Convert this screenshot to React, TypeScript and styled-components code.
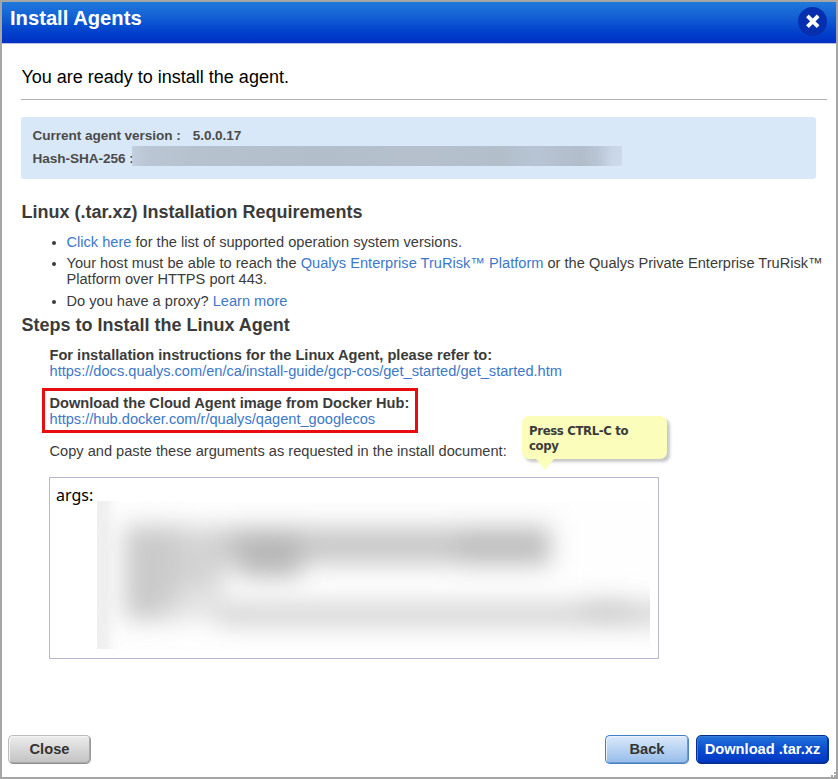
import React from "react";
import styled, { createGlobalStyle } from "styled-components";

const GlobalStyle = createGlobalStyle`
  *, *::before, *::after { box-sizing: border-box; }
  body {
    margin: 0;
    background: #fff;
    font-family: "Liberation Sans", Arial, sans-serif;
    color: #3b3b3b;
  }
`;

const Dialog = styled.div`
  position: relative;
  display: flex;
  flex-direction: column;
  width: 838px;
  height: 779px;
  border: 2px solid #a5a5a5;
  background: #fff;
`;

const Header = styled.header`
  display: flex;
  justify-content: space-between;
  align-items: flex-start;
  flex: none;
  height: 42px;
  padding: 5px 9px 0 8px;
  border-bottom: 1px solid #b4c0e4;
  background: linear-gradient(#2078dc 0%, #1565d6 30%, #0343cc 70%, #0030c4 100%);
`;

const Title = styled.h1`
  margin: 0;
  font-size: 20.2px;
  line-height: 23px;
  color: #fff;
`;

const CloseIcon = styled.button`
  display: flex;
  width: 29px;
  height: 29px;
  padding: 0;
  border: 0;
  background: none;
`;

const Body = styled.main`
  flex: 1;
  padding: 22px 9px 0 19px;
`;

const Intro = styled.p`
  margin: 0;
  height: 34px;
  padding-left: 0.4px;
  border-bottom: 1px solid #b0b0b0;
  font-size: 18px;
  line-height: 22px;
  color: #000;
`;

const InfoPanel = styled.dl`
  display: flex;
  flex-direction: column;
  width: 795px;
  height: 62px;
  margin: 17px 0 23px;
  padding: 6px 11.5px;
  border-radius: 3px;
  background: #d9e8f8;
  font-size: 13.6px;
  font-weight: bold;
  line-height: 25px;
  letter-spacing: -0.06px;
  color: #4b4b4b;
`;

const InfoRow = styled.div`
  display: flex;
  height: 23px;
`;

const InfoLabel = styled.dt`
  white-space: nowrap;
`;

const InfoValue = styled.dd`
  margin: 0 0 0 12px;
`;

const HashLabel = styled(InfoLabel)`
  width: 99.5px;
`;

const HashValue = styled.dd`
  width: 490px;
  height: 20px;
  margin: 0;
  background:
    radial-gradient(ellipse 42px 24px at 470px 0, rgba(188, 202, 220, 0.3), transparent),
    linear-gradient(90deg, #c2cfde 0, #bac6d3 16px, #b6c2ce 60px, #b2bfcb 190px, #b5c0cc 290px, #b2bfcb 370px, #b7c4d3 405px, #b1bcc9 450px, #b8c4d2 466px, #cad8e9 480px, #cddbeb 490px);
`;

const SectionTitle = styled.h2`
  margin: 0;
  padding-left: 0.4px;
  font-size: 18px;
  line-height: 20px;
`;

const Requirements = styled.ul`
  margin: 12px -9px 6px 0;
  padding: 0 0 0 45.5px;
  font-size: 14.62px;
  line-height: 16px;
`;

const Requirement = styled.li`
  margin-bottom: 5px;
  white-space: nowrap;
  &:nth-child(2) { margin-bottom: 6px; }
`;

const Link = styled.a`
  color: #3c78c8;
  text-decoration: none;
`;

const Step = styled.section<{ $highlight?: boolean }>`
  width: ${(p) => (p.$highlight ? "376px" : "fit-content")};
  margin: ${(p) => (p.$highlight ? "9px 0 10px 21px" : "12px 0 0 28px")};
  padding: ${(p) => (p.$highlight ? "4px 0 3px 4.5px" : "0 0 0 0.5px")};
  border: ${(p) => (p.$highlight ? "3px solid #e80c10" : "0")};
  font-size: 14.62px;
  line-height: 16px;
  white-space: nowrap;
`;

const StepTitle = styled.strong`
  display: block;
`;

const CopyHint = styled.p`
  margin: 0 0 18px 28.5px;
  font-size: 14.62px;
  line-height: 16px;
`;

const ArgsBox = styled.div`
  width: 610px;
  height: 182px;
  margin-left: 28px;
  padding: 6px 6px;
  border: 1px solid #b9b7cb;
  font-family: "Noto Sans", Tahoma, sans-serif;
  font-size: 16px;
  line-height: 22px;
  color: #000;
`;

const Redaction = styled.svg`
  display: block;
  margin: -5px 0 0 41px;
`;

const Tooltip = styled.div`
  position: absolute;
  left: 520px;
  top: 414px;
  width: 145px;
  height: 43px;
  padding: 7px;
  border-radius: 7px;
  background: #fbfdba;
  box-shadow: 3px 3px 3px rgba(0, 0, 0, 0.22);
  font: bold 13px/15px "DejaVu Sans Condensed", "DejaVu Sans", Tahoma, sans-serif;
  font-stretch: condensed;
  letter-spacing: -0.35px;
  &::after {
    content: "";
    position: absolute;
    left: 14px;
    top: 43px;
    border: 9px solid transparent;
    border-top: 11px solid #fbfdba;
    border-bottom: 0;
  }
`;

const Footer = styled.footer`
  display: flex;
  gap: 7px;
  flex: none;
  padding: 0 7px 13px 6px;
`;

type Kind = "plain" | "light" | "primary";

const looks: Record<Kind, string> = {
  plain: `
    width: 83px; margin-right: auto; color: #333;
    border-color: #bcbcbc #999 #8e8e8e #bcbcbc;
    background: linear-gradient(#ececec, #c2c2c2);
    box-shadow: inset 1px 1px 0 #f4f4f4, inset -1px -1px 0 #aaa;`,
  light: `
    width: 84px; color: #333;
    border-color: #3f7fc6 #4e86c4 #4a80bd #3f7fc6;
    background: linear-gradient(#dce9fa, #95bce9);
    box-shadow: inset 1px 1px 0 #eaf3fd, inset -1px -1px 0 #699bd2;`,
  primary: `
    width: 133px; color: #fff;
    border-color: #062f92;
    background: linear-gradient(#2273da, #0a4dce 50%, #0035c4);
    box-shadow: inset 1px 1px 0 #3a7edb, inset -1px -1px 0 #0532a2;`,
};

const Button = styled.button<{ $kind: Kind }>`
  height: 29px;
  padding: 0 0 2px;
  border: 1px solid;
  border-radius: 5px;
  font: bold 14.67px "Liberation Sans", Arial, sans-serif;
  white-space: nowrap;
  ${(p) => looks[p.$kind]}
`;

const Grip = styled.svg`
  position: absolute;
  right: 0;
  bottom: 0;
`;

export default function App() {
  return (
    <>
      <GlobalStyle />
      <Dialog>
        <Header>
          <Title>Install Agents</Title>
          <CloseIcon aria-label="Close dialog">
            <svg width="29" height="29" viewBox="0 0 29 29">
              <circle cx="14.5" cy="14.5" r="14.5" fill="#052fae" />
              <path d="M10.8 10.3 18.8 18.3M18.8 10.3l-8 8" stroke="#fff" strokeWidth="3.8" strokeLinecap="square" />
            </svg>
          </CloseIcon>
        </Header>
        <Body>
          <Intro>You are ready to install the agent.</Intro>
          <InfoPanel>
            <InfoRow>
              <InfoLabel>Current agent version :</InfoLabel>
              <InfoValue>5.0.0.17</InfoValue>
            </InfoRow>
            <InfoRow>
              <HashLabel>Hash-SHA-256 :</HashLabel>
              <HashValue />
            </InfoRow>
          </InfoPanel>
          <SectionTitle>Linux (.tar.xz) Installation Requirements</SectionTitle>
          <Requirements>
            <Requirement>
              <Link>Click here</Link> for the list of supported operation system versions.
            </Requirement>
            <Requirement>
              Your host must be able to reach the <Link>Qualys Enterprise TruRisk™ Platform</Link> or the Qualys Private Enterprise TruRisk™
              <br />
              Platform over HTTPS port 443.
            </Requirement>
            <Requirement>
              Do you have a proxy? <Link>Learn more</Link>
            </Requirement>
          </Requirements>
          <SectionTitle>Steps to Install the Linux Agent</SectionTitle>
          <Step>
            <StepTitle>For installation instructions for the Linux Agent, please refer to:</StepTitle>
            <Link>https://docs.qualys.com/en/ca/install-guide/gcp-cos/get_started/get_started.htm</Link>
          </Step>
          <Step $highlight>
            <StepTitle>Download the Cloud Agent image from Docker Hub:</StepTitle>
            <Link>https://hub.docker.com/r/qualys/qagent_googlecos</Link>
          </Step>
          <CopyHint>Copy and paste these arguments as requested in the install document:</CopyHint>
          <ArgsBox>
            args:
            <Redaction width="553" height="148" viewBox="0 0 553 148">
              <defs>
                <filter id="soft" x="-20%" y="-60%" width="140%" height="220%">
                  <feGaussianBlur stdDeviation="12" />
                </filter>
                <linearGradient id="edge">
                  <stop offset="0" stopColor="#efefef" />
                  <stop offset="0.35" stopColor="#f1f1f1" />
                  <stop offset="1" stopColor="#fff" stopOpacity="0" />
                </linearGradient>
              </defs>
              <rect width="553" height="148" fill="#fefefe" />
              <rect width="28" height="148" fill="url(#edge)" />
              <g filter="url(#soft)">
                <rect x="27" y="24" width="60" height="95" fill="#cacaca" />
                <rect x="80" y="26" width="48" height="64" fill="#d2d3d2" />
                <rect x="124" y="26" width="330" height="37" fill="#c8c8c8" />
                <rect x="142" y="30" width="62" height="46" fill="#b8b8b8" />
                <rect x="360" y="26" width="92" height="38" fill="#bebebe" />
                <rect x="70" y="95" width="55" height="22" fill="#e0e0e0" />
                <rect x="120" y="103" width="480" height="21" fill="#d0d0d0" />
                <rect x="485" y="99" width="48" height="25" fill="#c9c9c9" />
              </g>
            </Redaction>
          </ArgsBox>
        </Body>
        <Footer>
          <Button $kind="plain">Close</Button>
          <Button $kind="light">Back</Button>
          <Button $kind="primary">Download .tar.xz</Button>
        </Footer>
        <Tooltip role="tooltip">
          Press CTRL-C to
          <br />
          copy
        </Tooltip>
        <Grip width="5" height="5" viewBox="0 0 5 5" fill="#aaa">
          <path d="M3 0h2v2H3zM0 3h2v2H0zM3 3h2v2H3z" />
        </Grip>
      </Dialog>
    </>
  );
}
